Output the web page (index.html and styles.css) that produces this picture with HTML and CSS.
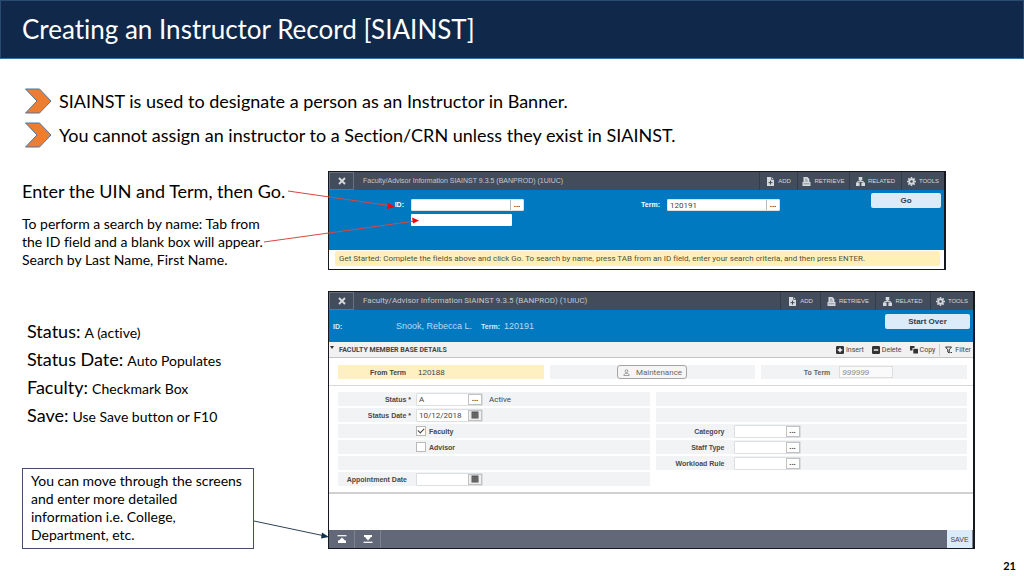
FILE: index.html
```html
<!DOCTYPE html>
<html lang="en">
<head>
<meta charset="utf-8">
<title>Creating an Instructor Record [SIAINST]</title>
<link rel="stylesheet" href="styles.css">
</head>
<body>
<svg class="defs" width="0" height="0" aria-hidden="true">
  <symbol id="i-close" viewBox="0 0 8 8"><path d="M1 1l6 6M7 1L1 7" stroke="currentColor" stroke-width="1.9"/></symbol>
  <symbol id="i-add" viewBox="0 0 9 9"><path d="M1 0h4.5L8 2.5V9H1z" fill="currentColor"/><path d="M5.5 0v2.5H8" fill="none" stroke="#434c5a" stroke-width=".7"/><path d="M4.5 3.6v4M2.5 5.6h4" stroke="#434c5a"/></symbol>
  <symbol id="i-retrieve" viewBox="0 0 9 9"><path d="M1.500 0h3.800L7.400 2V5H8.500v4H.5V5h1z" fill="currentColor"/><path d="M3 2.200h2M3 4h3M1.500 6.800h6" stroke="#434c5a" stroke-width=".5"/></symbol>
  <symbol id="i-related" viewBox="0 0 10 10"><path d="M3 0h4v4H3zM0 6.200h4V10H0zM6 6.200h4V10H6z" fill="currentColor"/><path d="M5 3v2M1.800 7V5h6.400v2" fill="none" stroke="currentColor" stroke-width="1"/></symbol>
  <symbol id="i-tools" viewBox="0 0 10 10"><circle cx="5" cy="5" r="2.500" fill="none" stroke="currentColor" stroke-width="2"/><path d="M5 0v2M5 8v2M0 5h2M8 5h2M1.500 1.500l1.400 1.400M7.100 7.100l1.400 1.400M8.500 1.500L7.100 2.900M2.900 7.100L1.500 8.500" stroke="currentColor" stroke-width="1.700"/></symbol>
  <symbol id="i-insert" viewBox="0 0 8 8"><rect width="8" height="8" rx="1.200" fill="#333"/><path d="M4 1.700v4.600M1.700 4h4.600" stroke="#fff" stroke-width="1.400"/></symbol>
  <symbol id="i-delete" viewBox="0 0 8 8"><rect width="8" height="8" rx="1.200" fill="#333"/><path d="M1.800 4h4.400" stroke="#fff" stroke-width="1.400"/></symbol>
  <symbol id="i-copy" viewBox="0 0 8 8"><path d="M0 0h4.500v2H2.500v2.500H0z" fill="#333"/><path d="M3.300 2.800H8V7.500H3.300z" fill="#333"/></symbol>
  <symbol id="i-filter" viewBox="0 0 8 8"><path d="M.5 1h6L4.200 3.800V7L2.800 6V3.800z" fill="none" stroke="#333" stroke-width="1"/><path d="M5.500 6.500h1.500" stroke="#333" stroke-width="1.200"/></symbol>
  <symbol id="i-person" viewBox="0 0 8 8"><circle cx="4" cy="2.500" r="1.600" fill="none" stroke="#777" stroke-width=".8"/><path d="M1 7.500h6C7 5.500 5.500 5 4 5S1 5.500 1 7.500z" fill="none" stroke="#777" stroke-width=".8"/></symbol>
  <symbol id="i-calendar" viewBox="0 0 8 8"><path d="M.5.5h7v7h-7z" fill="#555"/><path d="M1 2.500h6M1 4.200h6M1 5.900h6M2.800 2.500v5M5.200 2.500v5" stroke="#888" stroke-width=".4"/></symbol>
  <symbol id="i-first" viewBox="0 0 10 8"><path d="M.5.7h9" stroke="#fff" stroke-width="1.200"/><path d="M5 2.500l3 3h1V8H1V5.500h1z" fill="#fff"/></symbol>
  <symbol id="i-last" viewBox="0 0 10 8"><path d="M.5 7.300h9" stroke="#fff" stroke-width="1.200"/><path d="M1 0h8v2H8L5 5.400 2 2H1z" fill="#fff"/></symbol>
</svg>

<div class="slide">
  <header class="banner"><h1>Creating an Instructor Record [SIAINST]</h1></header>

  <ul class="bullets">
    <li><svg class="chevron" viewBox="0 0 28 26"><path d="M1.500 1h14L27 13 15.500 25h-14L13 13z"/></svg>SIAINST is used to designate a person as an Instructor in Banner.</li>
    <li><svg class="chevron" viewBox="0 0 28 26"><path d="M1.500 1h14L27 13 15.500 25h-14L13 13z"/></svg>You cannot assign an instructor to a Section/CRN unless they exist in SIAINST.</li>
  </ul>

  <main>
    <section class="step">
      <div class="notes">
        <h2>Enter the UIN and Term, then Go.</h2>
        <p>To perform a search by name: Tab from<br>the ID field and a blank box will appear.<br>Search by Last Name, First Name.</p>
      </div>
      <div class="app app-search">
        <div class="topbar">
          <button class="close" aria-label="Close"><svg><use href="#i-close"/></svg></button>
          <span class="app-title">Faculty/Advisor Information SIAINST 9.3.5 (BANPROD) (1UIUC)</span>
          <button class="tool"><svg><use href="#i-add"/></svg>ADD</button>
          <button class="tool"><svg><use href="#i-retrieve"/></svg>RETRIEVE</button>
          <button class="tool"><svg><use href="#i-related"/></svg>RELATED</button>
          <button class="tool"><svg><use href="#i-tools"/></svg>TOOLS</button>
        </div>
        <form class="keyblock">
          <label class="id-label" for="uin">ID:</label>
          <div class="id-fields">
            <span class="lookup"><input id="uin" type="text"><button type="button" aria-label="Look up ID">...</button></span>
            <input class="name-box" type="text" aria-label="Name">
          </div>
          <label class="term-label" for="term">Term:</label>
          <span class="lookup"><input id="term" type="text" value="120191"><button type="button" aria-label="Look up term">...</button></span>
          <button class="primary" type="button">Go</button>
        </form>
        <p class="hint">Get Started: Complete the fields above and click Go. To search by name, press TAB from an ID field, enter your search criteria, and then press ENTER.</p>
      </div>
      <svg class="connectors red" viewBox="0 0 160 64" aria-hidden="true">
        <path class="line" d="M25 4L129 19M1 55L152 34"/>
        <path class="tip" d="M132 20l-7-4-1 6zM156 33.500l-7-3 1 6z"/>
      </svg>
    </section>

    <section class="step">
      <div class="notes">
        <dl class="settings">
          <div><dt>Status:</dt> <dd>A (active)</dd></div>
          <div><dt>Status Date:</dt> <dd>Auto Populates</dd></div>
          <div><dt>Faculty:</dt> <dd>Checkmark Box</dd></div>
          <div><dt>Save:</dt> <dd>Use Save button or F10</dd></div>
        </dl>
        <p class="callout">You can move through the screens and enter more detailed information i.e. College, Department, etc.</p>
      </div>
      <div class="app app-record">
        <div class="topbar">
          <button class="close" aria-label="Close"><svg><use href="#i-close"/></svg></button>
          <span class="app-title">Faculty/Advisor Information SIAINST 9.3.5 (BANPROD) (1UIUC)</span>
          <button class="tool"><svg><use href="#i-add"/></svg>ADD</button>
          <button class="tool"><svg><use href="#i-retrieve"/></svg>RETRIEVE</button>
          <button class="tool"><svg><use href="#i-related"/></svg>RELATED</button>
          <button class="tool"><svg><use href="#i-tools"/></svg>TOOLS</button>
        </div>
        <div class="summary">
          <b class="summary-id">ID:</b><span>Snook, Rebecca L.</span><b>Term:</b><span>120191</span>
          <button class="primary" type="button">Start Over</button>
        </div>
        <div class="section-bar">
          <h3>FACULTY MEMBER BASE DETAILS</h3>
          <button><svg><use href="#i-insert"/></svg>Insert</button>
          <button><svg><use href="#i-delete"/></svg>Delete</button>
          <button><svg><use href="#i-copy"/></svg>Copy</button>
          <button class="filter"><svg><use href="#i-filter"/></svg>Filter</button>
        </div>
        <div class="terms">
          <div class="cell current"><b>From Term</b><span>120188</span></div>
          <div class="cell middle"><button class="maintenance"><svg><use href="#i-person"/></svg>Maintenance</button></div>
          <div class="cell to"><label for="to-term">To Term</label><input id="to-term" type="text" value="999999"></div>
        </div>
        <form class="details">
          <div class="column">
            <div class="row"><label class="req" for="status">Status *</label><span class="lookup"><input id="status" type="text" value="A"><button type="button" aria-label="Look up status">...</button></span><span class="desc">Active</span></div>
            <div class="row"><label class="req" for="sdate">Status Date *</label><span class="lookup"><input id="sdate" type="text" value="10/12/2018"><button class="cal" type="button" aria-label="Pick date"><svg><use href="#i-calendar"/></svg></button></span></div>
            <div class="row check"><input id="fac" type="checkbox" checked><label for="fac">Faculty</label></div>
            <div class="row check"><input id="adv" type="checkbox"><label for="adv">Advisor</label></div>
            <div class="row"></div>
            <div class="row"><label for="adate">Appointment Date</label><span class="lookup"><input id="adate" type="text"><button class="cal" type="button" aria-label="Pick date"><svg><use href="#i-calendar"/></svg></button></span></div>
          </div>
          <div class="column">
            <div class="row"></div>
            <div class="row"></div>
            <div class="row"><label for="cat">Category</label><span class="lookup"><input id="cat" type="text"><button type="button" aria-label="Look up category">...</button></span></div>
            <div class="row"><label for="staff">Staff Type</label><span class="lookup"><input id="staff" type="text"><button type="button" aria-label="Look up staff type">...</button></span></div>
            <div class="row"><label for="work">Workload Rule</label><span class="lookup"><input id="work" type="text"><button type="button" aria-label="Look up workload rule">...</button></span></div>
          </div>
        </form>
        <div class="footbar">
          <button aria-label="Previous section"><svg><use href="#i-first"/></svg></button>
          <button aria-label="Next section"><svg><use href="#i-last"/></svg></button>
          <button class="save">SAVE</button>
        </div>
      </div>
      <svg class="connectors navy" viewBox="0 0 80 24" aria-hidden="true">
        <path class="line" d="M1 4L72 19"/>
        <path class="tip" d="M76 20l-7-4.500-1 6z"/>
      </svg>
    </section>
  </main>
  <footer class="page-number">21</footer>
</div>
</body>
</html>
```
FILE: styles.css
```css
* { box-sizing: border-box; }
body { margin: 0; background: #fff; color: #000; font-family: Lato, "Liberation Sans", sans-serif; font-variant-ligatures: none; }
h1, h2, h3, p, ul, dl, dd { margin: 0; padding: 0; font-weight: 400; }
button, input { font: inherit; color: inherit; margin: 0; padding: 0; border: 0; background: none; }
svg { display: block; flex: none; }
.defs { position: absolute; }

.slide { min-height: 100vh; display: flex; flex-direction: column; }
.banner { background: #10294b; border: 1px solid #2b4a70; border-bottom: 1px solid #41719c; padding: 12px 21px; }
.banner h1 { color: #fff; font-size: 26px; line-height: 33px; }

.bullets { list-style: none; padding: 29px 24px 0; }
.bullets li { display: flex; align-items: center; gap: 7px; height: 26px; margin-bottom: 8px; font-size: 18px; line-height: 24px; }
.chevron { width: 28px; height: 26px; fill: #ed7d31; stroke: #4d77a3; stroke-width: 1; }

main { padding: 15px 49px 0 22px; display: flex; flex-direction: column; gap: 21px; }
.step { position: relative; display: grid; grid-template-columns: 306px minmax(0, 1fr); }
.notes { display: flex; flex-direction: column; }
.notes h2 { font-size: 18px; line-height: 24px; padding-top: 8px; }
.notes p { font-size: 14px; line-height: 18px; padding-top: 12px; }
.settings { padding: 26px 0 0 5px; }
.settings div { height: 28px; line-height: 28px; }
.settings dt, .settings dd { display: inline; }
.settings dt { font-size: 18px; }
.settings dd { font-size: 14px; }
.notes .callout { width: 232px; margin-top: auto; padding: 3px 8px 4px; border: 1px solid #434c6b; }

.connectors { position: absolute; overflow: visible; }
.connectors .line { fill: none; stroke-width: 1; }
.red { left: 241px; top: 16px; width: 160px; height: 64px; }
.red .line { stroke: #d9473f; }
.red .tip { fill: #f00; }
.navy { left: 231px; bottom: 8px; width: 80px; height: 24px; }
.navy .line { stroke: #2c4258; }
.navy .tip { fill: #12304f; }

.app { border: 1px solid #15191f; border-right-width: 2px; font-family: "Liberation Sans", Arial, sans-serif; font-size: 7px; color: #444; background: #fff; }
.app-search { margin-right: 29px; }
.app button { display: flex; align-items: center; justify-content: center; }

.topbar { display: flex; height: 18px; background: #434c5a; color: #d5d9de; }
.close { width: 25px; border: 1px solid #687180; }
.close svg { width: 8px; height: 8px; }
.app-title { flex: 1; padding-left: 9px; line-height: 18px; color: #c3c8cf; }
.app-record .app-title { font-family: Roboto, sans-serif; font-size: 8px; }
.app .tool { width: 52px; gap: 3px; font-size: 6px; border-left: 1px solid #343c48; }
.app .tool:nth-of-type(2) { width: 38px; }
.app .tool:nth-of-type(5) { width: 43px; }
.tool svg { width: 9px; height: 9px; }
.app-record .tool { width: 55px; }
.app-record .tool:nth-of-type(2) { width: 40px; }

.keyblock { display: flex; height: 60px; padding: 9px 3px 0 0; background: #0079c1; font-size: 7px; }
.keyblock label { color: #fff; font-weight: 700; line-height: 12px; text-align: right; padding-right: 7px; }
.id-label { width: 82px; }
.term-label { width: 143px; }
.keyblock .lookup { width: 113px; }
.id-fields { display: flex; flex-direction: column; gap: 3px; }
.lookup { display: flex; height: 12px; background: #fff; border: 1px solid #dcdfe2; border-radius: 1px; }
.lookup input { flex: 1; min-width: 0; padding-left: 2px; font-family: Roboto, sans-serif; font-size: 8px; }
.lookup button { width: 13px; border-left: 1px solid #b5bac0; font-size: 8px; font-weight: 700; line-height: 6px; color: #444; }
.name-box { width: 101px; height: 12px; background: #fff; border-radius: 1px; }
.primary { border-radius: 2px; font-size: 8px; font-weight: 700; height: 15px; margin-left: auto; background: #dcebfa; color: #333d4a; }
.keyblock .primary { width: 70px; margin-top: -6px; }
.hint { margin: 1px 4px 3px 6px; padding-left: 4px; background: #fff0b8; border-radius: 2px; font-family: Roboto, sans-serif; font-size: 8px; line-height: 15px; color: #51503f; white-space: nowrap; }

.summary { display: flex; align-items: center; height: 32px; padding: 0 3px 0 4px; background: #0079c1; color: #b9dcf5; font-size: 9px; }
.summary b { font-size: 7px; color: #d9ecfa; margin: 0 4px 0 9px; }
.summary .summary-id { width: 63px; margin: 0; }
.summary .primary { width: 85px; align-self: flex-start; margin-top: 4px; }
.section-bar { display: flex; align-items: center; height: 16px; padding: 0 2px 0 10px; gap: 8px; background: #f1f1f1; border-bottom: 1px solid #c4c4c4; position: relative; }
.section-bar::before { content: ""; position: absolute; left: 1px; top: 4px; border: 2px solid transparent; border-top: 3px solid #333; }
.section-bar h3 { flex: 1; font-family: Roboto, sans-serif; font-size: 7px; font-weight: 700; color: #444; }
.section-bar button { gap: 2px; font-family: Roboto, sans-serif; font-size: 7px; color: #444; }
.section-bar svg { width: 8px; height: 8px; }
.section-bar .filter { border-left: 1px solid #ccc; padding-left: 5px; margin-left: -4px; height: 12px; }

.terms { display: grid; grid-template-columns: repeat(3, 1fr); gap: 6px; padding: 7px 6px 6px 9px; border-bottom: 1px solid #d9d9d9; }
.cell { display: flex; align-items: center; height: 14px; background: #f2f3f5; }
.current { background: #fff0c2; font-size: 8px; }
.current b { width: 80px; padding-right: 12px; font-size: 7px; text-align: right; white-space: nowrap; }
.middle { justify-content: center; }
.maintenance { gap: 6px; width: 70px; height: 14px; border: 1px solid #a5a5a5; border-radius: 3px; font-family: Roboto, sans-serif; font-size: 8px; color: #666; }
.app .maintenance { background: #f5f5f5; }
.maintenance svg { width: 7px; height: 7px; }
.to label { width: 78px; padding-right: 9px; text-align: right; font-weight: 700; color: #666; }
.to input { width: 54px; height: 12px; padding-left: 2px; background: #fafafa; border: 1px solid #ddd; font-size: 8px; font-style: italic; color: #888; }

.details { display: grid; grid-template-columns: 1fr 1fr; gap: 6px; padding: 6px 6px 6px 9px; border-bottom: 2px solid #d0d0d0; }
.column { display: flex; flex-direction: column; gap: 2px; }
.row { display: flex; align-items: center; height: 14px; background: #f2f3f5; }
.row > label { width: 78px; padding-right: 9px; text-align: right; font-weight: 700; color: #4a4a4a; white-space: nowrap; }
.row > .req { padding-right: 5px; }
.row .lookup { width: 67px; height: 13px; }
.row .lookup button { width: 14px; background: #fff; border: 1px solid #c2c2c2; }
.row .lookup .cal { background: #eee; }
.cal svg { width: 8px; height: 8px; }
.desc { padding-left: 6px; font-family: Roboto, sans-serif; font-size: 8px; }
.row.check { padding-left: 78px; }
.row.check label { width: auto; padding-left: 3px; }
.check input { appearance: none; width: 10px; height: 10px; background: #fff; border: 1px solid #b9b9b9; }
.check input:checked::after { content: ""; display: block; width: 5px; height: 3px; margin: 1px; border-left: 1px solid #444; border-bottom: 1px solid #444; transform: rotate(-45deg); }

.footbar { display: flex; height: 18px; margin-top: 36px; background: #636878; }
.footbar button { width: 26px; border-right: 1px solid #7d8291; }
.footbar svg { width: 10px; height: 8px; }
.footbar .save { margin-left: auto; background: #dcebfa; color: #444; }

.page-number { margin-top: auto; padding: 0 8px 3px 0; text-align: right; font-size: 11px; line-height: 14px; font-weight: 700; }
@media (max-width: 980px) { .hint { white-space: normal; } }
```
